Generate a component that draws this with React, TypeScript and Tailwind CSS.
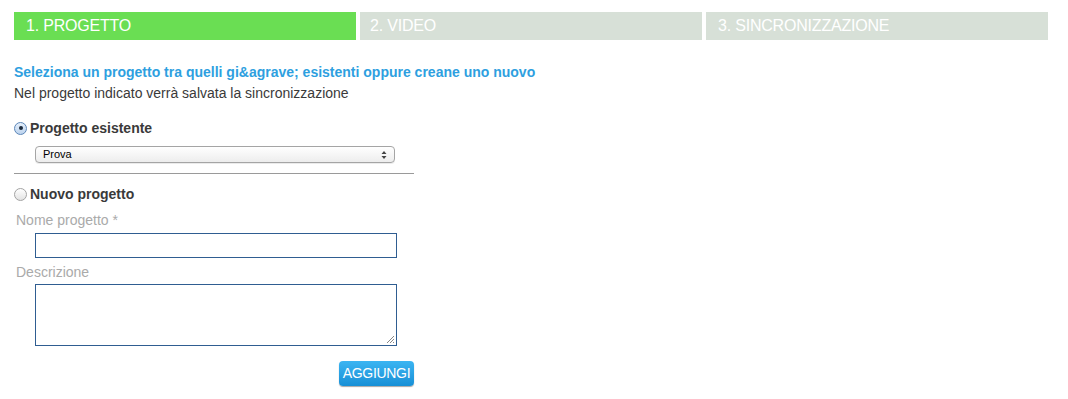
import React from "react";

export default function App() {
  return (
    <div className="w-[1068px] h-[399px] bg-white pt-[12px] pl-[14px]" style={{ fontFamily: '"Liberation Sans", Arial, sans-serif' }}>
      <div className="flex gap-[4px]">
        <div className="w-[342px] h-[28px] bg-[#6ade53] text-white text-[16px] pl-[12px] flex items-center tracking-[-0.2px]">1. PROGETTO</div>
        <div className="w-[342px] h-[28px] bg-[#d7e0d7] text-white text-[16px] pl-[10px] flex items-center tracking-[-0.2px]">2. VIDEO</div>
        <div className="w-[342px] h-[28px] bg-[#d7e0d7] text-white text-[16px] pl-[12px] flex items-center tracking-[-0.2px]">3. SINCRONIZZAZIONE</div>
      </div>
      <div className="w-[400px]">
        <div className="mt-[23px] text-[14px] font-bold text-[#2e9fe0] leading-[18px] whitespace-nowrap">Seleziona un progetto tra quelli gi&amp;agrave; esistenti oppure creane uno nuovo</div>
        <div className="mt-[3px] text-[14px] text-[#3a3a3a] leading-[18px] whitespace-nowrap">Nel progetto indicato verrà salvata la sincronizzazione</div>

        <div className="mt-[17px] flex items-center gap-[3px] h-[18px]">
          <span className="w-[13px] h-[13px] rounded-full border border-[#5b86b8] bg-gradient-to-b from-[#e6f0fb] to-[#bcd3ee] flex items-center justify-center">
            <span className="w-[4px] h-[4px] rounded-full bg-[#1b2a3c]" />
          </span>
          <span className="text-[14px] font-bold text-[#3a3a3a]">Progetto esistente</span>
        </div>
        <div className="mt-[9px] ml-[21px] w-[360px] h-[17px] rounded-[4px] border border-[#a5a5a5] bg-gradient-to-b from-white to-[#ededed] flex items-center justify-between px-[7px] shadow-[0_1px_0_rgba(0,0,0,0.08)]">
          <span className="text-[11px] text-black leading-none">Prova</span>
          <span className="flex flex-col items-center text-[#444] leading-none">
            <svg width="6" height="10" viewBox="0 0 6 10"><path d="M0.5 4 L3 1 L5.5 4 Z M0.5 6 L3 9 L5.5 6 Z" fill="#444" /></svg>
          </span>
        </div>
        <div className="mt-[10px] h-px bg-[#9a9a9a] w-[400px]" />

        <div className="mt-[11px] flex items-center gap-[3px] h-[18px]">
          <span className="w-[13px] h-[13px] rounded-full border border-[#a3a3a3] bg-gradient-to-b from-[#ffffff] to-[#e3e3e3]" />
          <span className="text-[14px] font-bold text-[#3a3a3a]">Nuovo progetto</span>
        </div>
        <div className="mt-[8px] pl-[2px] text-[14px] text-[#aaa] leading-[18px]">Nome progetto *</div>
        <div className="mt-[4px] ml-[21px] w-[362px] h-[25px] border border-[#2f5d91]" />
        <div className="mt-[5px] pl-[2px] text-[14px] text-[#aaa] leading-[18px]">Descrizione</div>
        <div className="mt-[3px] ml-[21px] w-[362px] h-[62px] border border-[#2f5d91] relative">
          <svg className="absolute right-[1px] bottom-[1px]" width="9" height="9" viewBox="0 0 9 9">
            <path d="M8 1 L1 8 M8 4 L4 8 M8 7 L7 8" stroke="#888" strokeWidth="1" />
          </svg>
        </div>
        <div className="mt-[15px] flex justify-end">
          <div className="w-[75px] h-[25px] rounded-[4px] bg-gradient-to-b from-[#3bb5f2] to-[#168fd6] text-white text-[14px] flex items-center justify-center shadow-[0_1px_1px_rgba(0,0,0,0.35)] tracking-[-0.3px]">AGGIUNGI</div>
        </div>
      </div>
    </div>
  );
}
